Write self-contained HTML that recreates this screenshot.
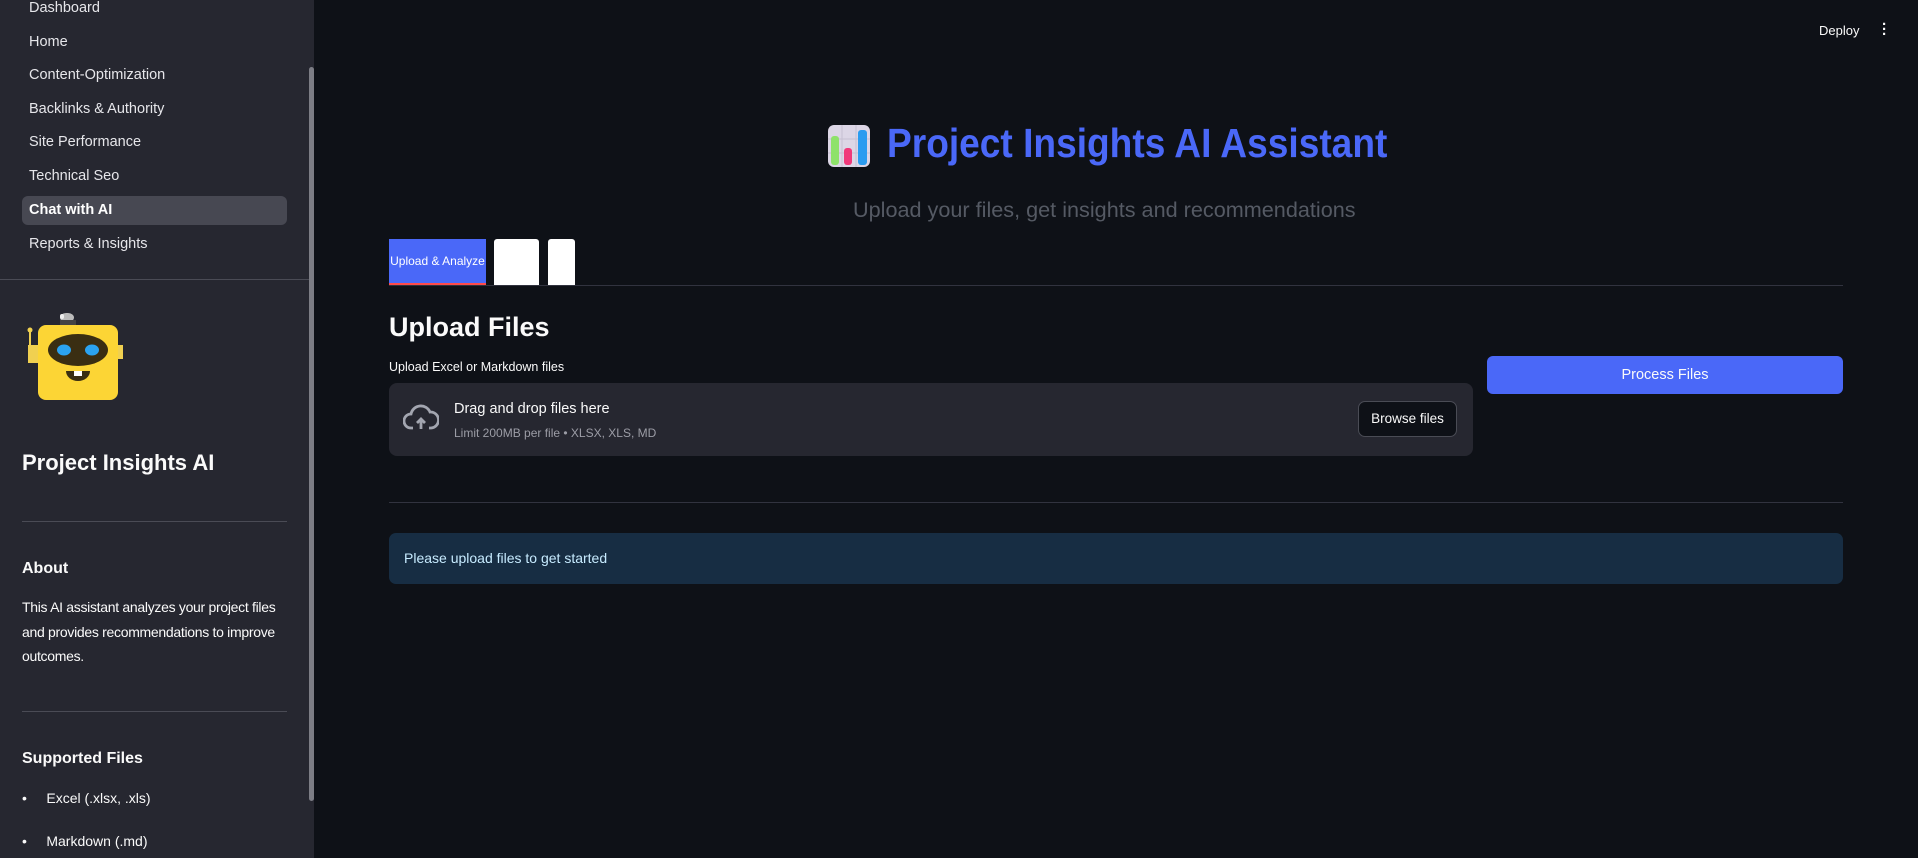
<!DOCTYPE html>
<html><head><meta charset="utf-8"><style>
*{box-sizing:border-box;margin:0;padding:0}
body{width:1918px;height:858px;overflow:hidden;background:#0e1117;font-family:"Liberation Sans",sans-serif;color:#fafafa;position:relative}
.sb{position:absolute;left:0;top:0;width:314px;height:858px;background:#262730}
.abs{position:absolute;white-space:nowrap}
.nav{left:29px;font-size:14.5px;color:#e6e6ea}
.hr{position:absolute;height:1px;background:#4a4b55}
</style></head><body>
<div class="sb">
<div class="abs nav" style="top:0px">Dashboard</div>
<div class="abs nav" style="top:34px">Home</div>
<div class="abs nav" style="top:67px">Content-Optimization</div>
<div class="abs nav" style="top:101px">Backlinks &amp; Authority</div>
<div class="abs nav" style="top:134px">Site Performance</div>
<div class="abs nav" style="top:168px">Technical Seo</div>
<div class="abs" style="left:22px;top:196px;width:265px;height:29px;background:#474852;border-radius:6px"></div>
<div class="abs nav" style="top:202px;font-weight:bold;color:#fff">Chat with AI</div>
<div class="abs nav" style="top:236px">Reports &amp; Insights</div>
<div class="hr" style="left:0;top:279px;width:310px"></div>
<svg class="abs" style="left:24px;top:303px" width="102" height="102" viewBox="0 0 102 102">
<rect x="36" y="10" width="14" height="9" rx="6" fill="#bbb"/>
<rect x="36" y="11" width="4" height="5" rx="2" fill="#eee"/>
<rect x="36" y="17" width="16" height="5" fill="#444"/>
<rect x="4" y="42" width="12" height="18" fill="#f0d050"/><rect x="93" y="42" width="6" height="14" fill="#f0d050"/>
<rect x="5" y="28" width="2" height="16" fill="#f0d050"/><circle cx="6" cy="27" r="2.5" fill="#f0d050"/>
<rect x="14" y="22" width="80" height="75" rx="8" fill="#fcd535"/>
<ellipse cx="54" cy="47" rx="30" ry="16" fill="#3a2e12"/>
<ellipse cx="40" cy="47" rx="7" ry="5.5" fill="#2ba3f0"/><ellipse cx="68" cy="47" rx="7" ry="5.5" fill="#2ba3f0"/>
<path d="M42 68h24a12 10 0 0 1-24 0z" fill="#3a2e12"/><rect x="50" y="68" width="8" height="5" fill="#fff"/>
</svg>
<div class="abs" style="left:22px;top:450px;font-size:22px;font-weight:bold">Project Insights AI</div>
<div class="hr" style="left:22px;top:521px;width:265px"></div>
<div class="abs" style="left:22px;top:560px;font-size:16px;font-weight:bold">About</div>
<div class="abs" style="left:22px;top:595px;font-size:14px;line-height:24.5px;white-space:normal;width:268px;letter-spacing:-0.3px">This AI assistant analyzes your project files and provides recommendations to improve outcomes.</div>
<div class="hr" style="left:22px;top:711px;width:265px"></div>
<div class="abs" style="left:22px;top:750px;font-size:16px;font-weight:bold">Supported Files</div>
<div class="abs" style="left:22px;top:790px;font-size:14px">•&nbsp;&nbsp;&nbsp;&nbsp;&nbsp;Excel (.xlsx, .xls)</div>
<div class="abs" style="left:22px;top:833px;font-size:14px">•&nbsp;&nbsp;&nbsp;&nbsp;&nbsp;Markdown (.md)</div>
<div class="abs" style="left:309px;top:67px;width:5px;height:734px;background:#7c7d85;border-radius:3px"></div>
</div>
<div class="abs" style="left:1819px;top:23px;font-size:13px">Deploy</div>
<div class="abs" style="left:1882px;top:22px;font-size:15px;font-weight:bold;line-height:5px">·<br>·<br>·</div>
<svg class="abs" style="left:827px;top:124px" width="44" height="44" viewBox="0 0 44 44">
<rect x="1" y="1" width="42" height="42" rx="6" fill="#dcd6e6"/>
<path d="M15 1v42M29 1v42M1 15h42M1 29h42" stroke="#c6c0d2" stroke-width="1"/>
<rect x="4" y="12" width="8" height="29" rx="3" fill="#8ee26a"/>
<rect x="17" y="24" width="8" height="17" rx="3" fill="#f0397a"/>
<rect x="31" y="6" width="9" height="35" rx="3" fill="#2a9cf0"/>
</svg>
<div class="abs" style="left:887px;top:120px;font-size:41px;font-weight:bold;color:#4a68f8;transform:scaleX(0.905);transform-origin:left top">Project Insights AI Assistant</div>
<div class="abs" style="left:853px;top:199px;font-size:21px;color:#555a64;transform:scaleX(1.03);transform-origin:left top">Upload your files, get insights and recommendations</div>
<div class="abs" style="left:389px;top:239px;width:97px;height:46px;background:#4a68f8;border-bottom:2px solid #ff4b4b;font-size:12px;color:#fff;text-align:center;line-height:44px">Upload &amp; Analyze</div>
<div class="abs" style="left:494px;top:239px;width:45px;height:46px;background:#fff;border-radius:3px 3px 0 0"></div>
<div class="abs" style="left:548px;top:239px;width:27px;height:46px;background:#fff;border-radius:3px 3px 0 0"></div>
<div class="hr" style="left:389px;top:285px;width:1454px;background:#31333f"></div>
<div class="abs" style="left:389px;top:312px;font-size:27px;font-weight:bold">Upload Files</div>
<div class="abs" style="left:389px;top:360px;font-size:12.5px">Upload Excel or Markdown files</div>
<div class="abs" style="left:389px;top:383px;width:1084px;height:73px;background:#262730;border-radius:8px"></div>
<svg class="abs" style="left:403px;top:402px" width="36" height="32" viewBox="0 0 36 32"><path d="M10 26H8a7 7 0 0 1 0-14 10 10 0 0 1 19-2 8 8 0 0 1 1 16h-2" fill="none" stroke="#a3a6b0" stroke-width="2.8"/><path d="M18 27V17m-4 4l4-4 4 4" fill="none" stroke="#a3a6b0" stroke-width="2.8"/></svg>
<div class="abs" style="left:454px;top:401px;font-size:14.5px">Drag and drop files here</div>
<div class="abs" style="left:454px;top:426px;font-size:12px;color:#9c9da6">Limit 200MB per file • XLSX, XLS, MD</div>
<div class="abs" style="left:1358px;top:401px;width:99px;height:36px;background:#0e1117;border:1px solid #4a4c55;border-radius:7px;font-size:13.5px;text-align:center;line-height:34px">Browse files</div>
<div class="abs" style="left:1487px;top:356px;width:356px;height:38px;background:#4a68f8;border-radius:6px;font-size:14.5px;text-align:center;line-height:38px">Process Files</div>
<div class="hr" style="left:389px;top:502px;width:1454px;background:#31333f"></div>
<div class="abs" style="left:389px;top:533px;width:1454px;height:51px;background:#172d43;border-radius:7px"></div>
<div class="abs" style="left:404px;top:550px;font-size:14px;color:#c7ebff">Please upload files to get started</div>
</body></html>
